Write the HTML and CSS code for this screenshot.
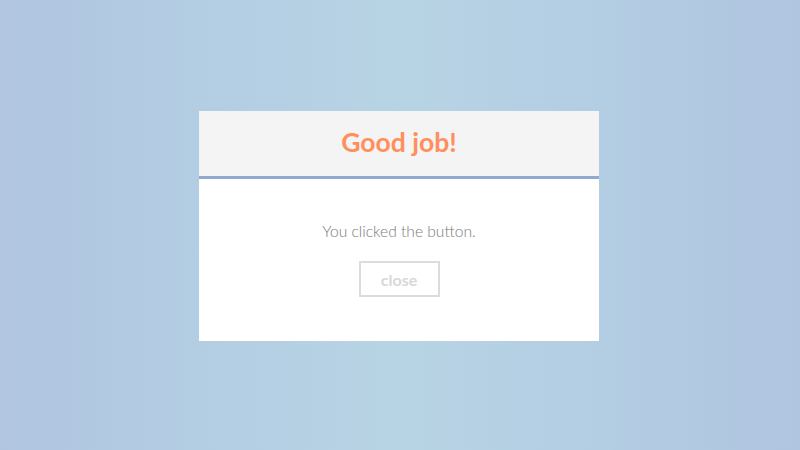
FILE: index.html
```html
<!DOCTYPE html>
<html>
<head>
<meta charset="utf-8">
<link rel="stylesheet" href="styles.css">
</head>
<body>
<div class="stage">
  <div class="modal">
    <div class="modal-header">
      <h1 class="title">Good job!</h1>
    </div>
    <div class="modal-body">
      <p class="message">You clicked the button.</p>
      <button class="close-btn">close</button>
    </div>
  </div>
</div>
</body>
</html>
```
FILE: styles.css
```css
html, body {
  margin: 0;
  padding: 0;
  width: 800px;
  height: 450px;
  overflow: hidden;
}
body {
  font-family: Lato, "Open Sans", sans-serif;
  background: linear-gradient(to right, #b1c5e1 0%, #b3cde3 25%, #b7d4e4 50%, #b3cde3 75%, #b0c5e0 100%);
}
.stage {
  height: 450px;
  display: flex;
  align-items: flex-start;
  justify-content: center;
  padding-top: 111px;
  box-sizing: border-box;
}
.modal {
  width: 400px;
  height: 230px;
  background: #fff;
  margin-left: -2px;
  display: flex;
  flex-direction: column;
}
.modal-header {
  height: 65px;
  background: #f4f4f4;
  border-bottom: 3px solid #91a8d0;
  display: flex;
  align-items: center;
  justify-content: center;
}
.title {
  margin: 0 0 3px 0;
  font-size: 26.5px;
  font-weight: 700;
  color: #ff8f5c;
  line-height: 1;
}
.modal-body {
  display: flex;
  flex-direction: column;
  align-items: center;
  padding-top: 43px;
}
.message {
  margin: 0;
  font-family: "Lato Light", Lato, sans-serif;
  font-size: 15.6px;
  font-weight: 300;
  color: #7a7a7a;
  line-height: 19px;
}
.close-btn {
  margin-top: 20px;
  width: 81px;
  height: 36px;
  background: #fff;
  border: 2px solid #dcdcdc;
  color: #d8d8d8;
  font-family: Lato, sans-serif;
  font-size: 16px;
  font-weight: 700;
  padding: 0;
  cursor: pointer;
}
```
